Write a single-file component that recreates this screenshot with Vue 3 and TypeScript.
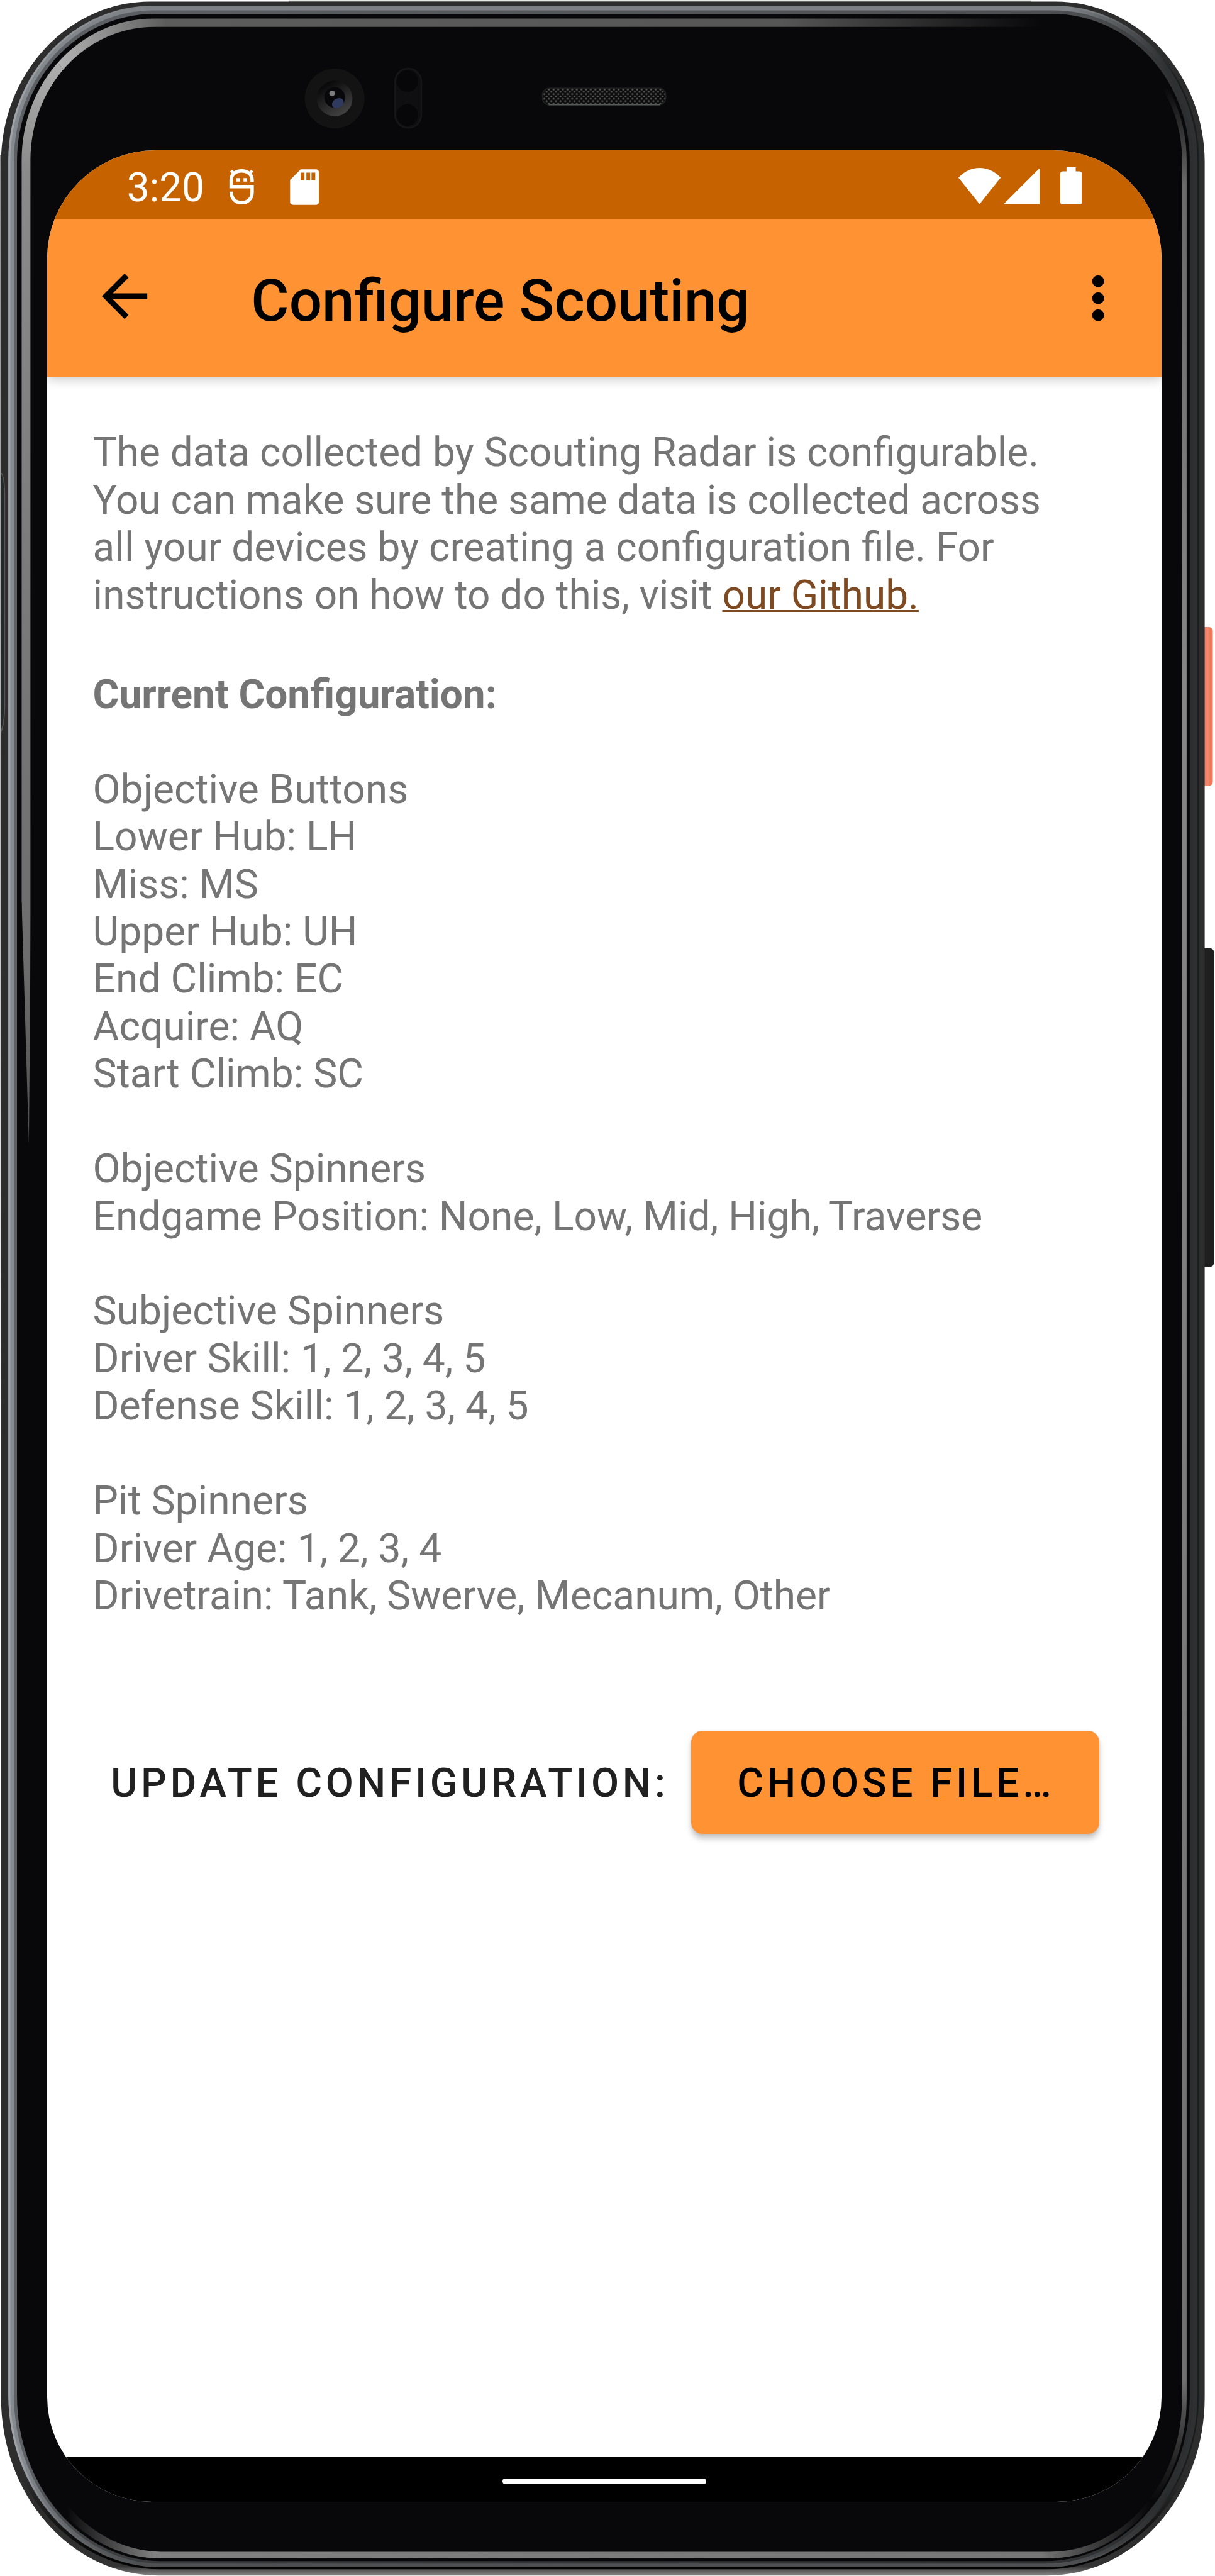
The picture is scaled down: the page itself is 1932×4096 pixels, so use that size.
<script setup lang="ts">
interface Group {
  title: string
  rows: string[]
}

const groups: Group[] = [
  {
    title: 'Objective Buttons',
    rows: ['Lower Hub: LH', 'Miss: MS', 'Upper Hub: UH', 'End Climb: EC', 'Acquire: AQ', 'Start Climb: SC'],
  },
  { title: 'Objective Spinners', rows: ['Endgame Position: None, Low, Mid, High, Traverse'] },
  { title: 'Subjective Spinners', rows: ['Driver Skill: 1, 2, 3, 4, 5', 'Defense Skill: 1, 2, 3, 4, 5'] },
  { title: 'Pit Spinners', rows: ['Driver Age: 1, 2, 3, 4', 'Drivetrain: Tank, Swerve, Mecanum, Other'] },
]

// Closed outline of the handset body, with elliptical corners:
// top corners use (tx, ty), bottom corners use (bx, by).
function outline(l: number, t: number, r: number, b: number, tx: number, ty: number, bx: number, by: number): string {
  return (
    `M${l + tx} ${t}H${r - tx}A${tx} ${ty} 0 0 1 ${r} ${t + ty}V${b - by}` +
    `A${bx} ${by} 0 0 1 ${r - bx} ${b}H${l + bx}A${bx} ${by} 0 0 1 ${l} ${b - by}` +
    `V${t + ty}A${tx} ${ty} 0 0 1 ${l + tx} ${t}Z`
  )
}

const shell = outline(2, 3, 2336, 4995, 290, 312, 305, 345)
const rim = outline(16, 11, 2325, 4979, 280, 300, 295, 335)
const rimMid = outline(20, 14, 2322, 4976, 277, 297, 292, 332)
const rimLow = outline(27, 20, 2314, 4972, 271, 291, 286, 326)
const gap = outline(33, 27, 2307, 4967, 265, 285, 280, 320)
const glint = outline(42, 36, 2301, 4962, 256, 274, 270, 308) + outline(59, 52, 2292, 4949, 240, 258, 256, 296)
const bottomLip = outline(6, 5, 2333, 4983, 288, 310, 303, 340)
</script>

<template>
  <div class="phone">
    <svg class="shell" viewBox="0 0 2356 4996" preserveAspectRatio="none" aria-hidden="true">
      <defs>
        <linearGradient id="edge" gradientUnits="userSpaceOnUse" x1="0" y1="4900" x2="0" y2="4996">
          <stop offset="0" stop-color="#2d2d2d" />
          <stop offset="0.8" stop-color="#333" />
          <stop offset="1" stop-color="#8a8a8a" />
        </linearGradient>
        <linearGradient id="lip" gradientUnits="userSpaceOnUse" x1="0" y1="4800" x2="0" y2="4960">
          <stop offset="0" stop-color="#2d2d2d" />
          <stop offset="1" stop-color="#050505" />
        </linearGradient>
        <linearGradient id="rimA" gradientUnits="userSpaceOnUse" x1="0" y1="0" x2="2356" y2="0">
          <stop offset="0" stop-color="#a3a7ab" />
          <stop offset="0.12" stop-color="#7c7f82" />
          <stop offset="0.9" stop-color="#7c7f82" />
          <stop offset="0.97" stop-color="#1b1c1d" />
        </linearGradient>
        <linearGradient id="rimB" gradientUnits="userSpaceOnUse" x1="0" y1="0" x2="2356" y2="0">
          <stop offset="0" stop-color="#868b91" />
          <stop offset="0.12" stop-color="#7e8286" />
          <stop offset="0.88" stop-color="#7e8286" />
          <stop offset="0.96" stop-color="#2e3032" />
        </linearGradient>
        <linearGradient id="rimC" gradientUnits="userSpaceOnUse" x1="0" y1="0" x2="2356" y2="0">
          <stop offset="0" stop-color="#5d6064" />
          <stop offset="0.9" stop-color="#4b4d50" />
          <stop offset="0.97" stop-color="#2c2e30" />
        </linearGradient>
        <linearGradient id="shade" gradientUnits="userSpaceOnUse" x1="0" y1="4780" x2="0" y2="4979">
          <stop offset="0" stop-color="#000" stop-opacity="0" />
          <stop offset="1" stop-color="#000" stop-opacity="0.4" />
        </linearGradient>
        <linearGradient id="gLeft" gradientUnits="userSpaceOnUse" x1="0" y1="0" x2="0" y2="2220">
          <stop offset="0.03" stop-color="#b8b8b8" />
          <stop offset="0.15" stop-color="#8a8a8a" />
          <stop offset="0.85" stop-color="#6c6c6c" />
          <stop offset="1" stop-color="#4c4c4c" />
        </linearGradient>
        <linearGradient id="gTop" gradientUnits="userSpaceOnUse" x1="0" y1="0" x2="2020" y2="0">
          <stop offset="0.05" stop-color="#b8b8b8" />
          <stop offset="0.16" stop-color="#5c5c5c" />
          <stop offset="0.75" stop-color="#565656" />
          <stop offset="1" stop-color="#565656" stop-opacity="0" />
        </linearGradient>
        <linearGradient id="gBottom" gradientUnits="userSpaceOnUse" x1="130" y1="0" x2="2230" y2="0">
          <stop offset="0" stop-color="#808080" stop-opacity="0" />
          <stop offset="0.08" stop-color="#808080" />
          <stop offset="0.9" stop-color="#767676" />
          <stop offset="1" stop-color="#666" stop-opacity="0" />
        </linearGradient>
        <linearGradient id="gRight" gradientUnits="userSpaceOnUse" x1="0" y1="170" x2="0" y2="4850">
          <stop offset="0" stop-color="#666" stop-opacity="0" />
          <stop offset="0.04" stop-color="#6a6a6a" />
          <stop offset="0.25" stop-color="#868686" />
          <stop offset="0.95" stop-color="#707070" />
          <stop offset="1" stop-color="#555" stop-opacity="0" />
        </linearGradient>
        <linearGradient id="power" x1="0" y1="0" x2="1" y2="0">
          <stop offset="0" stop-color="#c9553b" />
          <stop offset="0.3" stop-color="#ee7b60" />
          <stop offset="0.6" stop-color="#f08a72" />
          <stop offset="0.85" stop-color="#ef6f4b" />
          <stop offset="1" stop-color="#f0a090" />
        </linearGradient>
        <linearGradient id="hair" x1="0" y1="0" x2="0" y2="1">
          <stop offset="0" stop-color="#8f8f8f" />
          <stop offset="0.6" stop-color="#c4c4c4" />
          <stop offset="1" stop-color="#fff" />
        </linearGradient>
        <linearGradient id="lensRing" x1="0" y1="0" x2="0.6" y2="1">
          <stop offset="0.2" stop-color="#0a0a0b" />
          <stop offset="1" stop-color="#414141" />
        </linearGradient>
        <pattern id="mesh" width="9" height="9" patternUnits="userSpaceOnUse">
          <rect width="9" height="9" fill="#0b0b0b" />
          <circle cx="2.5" cy="2.5" r="2" fill="#515151" />
          <circle cx="7" cy="7" r="2" fill="#515151" />
        </pattern>
        <clipPath id="cLeft"><path d="M0 0L400 436V1750H60L56 2220L42 1750H0Z" /></clipPath>
        <clipPath id="cTop"><path d="M0 0L400 436H2060V0Z" /></clipPath>
        <clipPath id="cBottom"><path d="M100 4840H2260V4996H100Z" /></clipPath>
        <clipPath id="cRight"><path d="M2200 150H2356V4860H2200Z" /></clipPath>
      </defs>

      <rect x="0" y="300" width="4" height="2500" fill="url(#hair)" />
      <path d="M560 1H2000V6H560Z" fill="#a4aaa4" />
      <rect x="2328" y="1216" width="24" height="308" rx="8" fill="url(#power)" />
      <rect x="2326" y="1839" width="28" height="618" rx="8" fill="#1f1f20" />

      <path :d="shell" fill="url(#edge)" />
      <path :d="bottomLip" fill="url(#lip)" />
      <path d="M2 917Q9 925 9 960V1370Q9 1400 2 1420" fill="#26292a" stroke="#555" stroke-width="2" />
      <path :d="rim" fill="url(#rimA)" />
      <path :d="rimMid" fill="url(#rimB)" />
      <path :d="rimLow" fill="url(#rimC)" />
      <path :d="rim" fill="url(#shade)" />
      <path :d="gap" fill="#08080a" />
      <g fill-rule="evenodd">
        <path :d="glint" fill="url(#gLeft)" clip-path="url(#cLeft)" />
        <path :d="glint" fill="url(#gTop)" clip-path="url(#cTop)" />
        <path :d="glint" fill="url(#gBottom)" clip-path="url(#cBottom)" />
        <path :d="glint" fill="url(#gRight)" clip-path="url(#cRight)" />
      </g>

      <!-- front camera -->
      <circle cx="649" cy="191" r="58" fill="#131313" />
      <circle cx="649" cy="191" r="34.5" fill="url(#lensRing)" />
      <circle cx="649" cy="189" r="20" fill="#08080b" />
      <ellipse cx="655" cy="200" rx="12" ry="9" fill="#303a5e" transform="rotate(-30 655 200)" />
      <circle cx="644" cy="181" r="5.5" fill="#7d7d7d" />
      <!-- proximity sensors -->
      <rect x="766" y="133" width="51" height="115" rx="25.5" fill="#0f0f11" stroke="#161618" stroke-width="3" />
      <circle cx="790" cy="157" r="21" fill="#070709" />
      <circle cx="790" cy="223" r="21" fill="#070709" />
      <!-- earpiece -->
      <rect x="1052" y="171" width="239" height="32" rx="13" fill="url(#mesh)" stroke="#222" stroke-width="2" />
      <path d="M1064 203H1280" stroke="#565a59" stroke-width="2.5" />
    </svg>

    <div class="screen">
      <header class="status">
        <span class="clock">3:20</span>
        <svg class="debug" viewBox="42 52 150 214" fill="none" stroke="#fff" stroke-width="20">
          <path
            d="M177 131V118C177 86 150 66 116 66C82 66 55 86 55 118V157H177V190C177 228 150 251 116 251C82 251 55 228 55 187"
          />
          <path d="M55 64L76 86M178 64L157 86" stroke-width="17" />
          <path d="M86 118H107M127 118H148" stroke-width="20" />
        </svg>
        <svg class="sdcard" viewBox="397 54 170 209" fill="#fff">
          <path
            fill-rule="evenodd"
            d="M460 55H547Q566 55 566 74V244Q566 262 547 262H417Q398 262 398 244V117ZM460 74V119H482V74ZM493 74V119H515V74ZM523 74V119H545V74Z"
          />
        </svg>
        <span class="spacer"></span>
        <svg class="wifi" viewBox="0 0 82 70" fill="#fff">
          <path d="M0 19Q18 0 41 0T82 19L41 70Z" />
        </svg>
        <svg class="signal" viewBox="0 0 70 70" fill="#fff"><path d="M70 0V70H0Z" /></svg>
        <svg class="battery" viewBox="0 0 42 72" fill="#fff">
          <path d="M12 0H30V8H37Q42 8 42 13V67Q42 72 37 72H5Q0 72 0 67V13Q0 8 5 8H12Z" />
        </svg>
      </header>

      <nav class="appbar">
        <svg class="back" viewBox="0 0 24 24"><path d="M20 11H7.83l5.59-5.59L12 4l-8 8 8 8 1.41-1.41L7.83 13H20v-2z" /></svg>
        <h1>Configure Scouting</h1>
        <svg class="more" viewBox="0 0 24 24">
          <circle cx="12" cy="6" r="2.08" />
          <circle cx="12" cy="12" r="2.08" />
          <circle cx="12" cy="18" r="2.08" />
        </svg>
      </nav>

      <main>
        <p class="intro">
          The data collected by Scouting Radar is configurable.<br />
          You can make sure the same data is collected across<br />
          all your devices by creating a configuration file. For<br />
          instructions on how to do this, visit <a href="#">our Github.</a>
        </p>
        <h2>Current Configuration:</h2>
        <section v-for="g in groups" :key="g.title">
          <div>{{ g.title }}</div>
          <div v-for="row in g.rows" :key="row">{{ row }}</div>
        </section>
        <div class="update">
          <span class="label">UPDATE CONFIGURATION:</span>
          <button type="button">CHOOSE FILE…</button>
        </div>
      </main>

      <footer class="navbar"><span class="handle"></span></footer>
    </div>
  </div>
</template>

<style>
html {
  font-size: 8.2px;
}
body {
  background: #fff;
}
</style>

<style scoped>
.phone {
  position: relative;
  box-sizing: border-box;
  width: 1932px;
  height: 4096px;
  padding: 29.2rem 0 0 9.2rem;
  overflow: hidden;
  font-family: Roboto, sans-serif;
}
.shell {
  position: absolute;
  inset: 0;
  width: 1932px;
  height: 4096px;
}
.screen {
  position: relative;
  display: flex;
  flex-direction: column;
  width: 216rem;
  height: 455.9rem;
  overflow: hidden;
  background: #fff;
  border-radius: 21rem 21rem 20.3rem 20.3rem;
}
.status {
  z-index: 2;
  display: flex;
  flex: none;
  align-items: flex-start;
  box-sizing: border-box;
  height: 13.2rem;
  padding: 3.4rem 15.4rem 0 15.4rem;
  background: #c66300;
}
.clock {
  width: 19.6rem;
  margin-top: -0.6rem;
  color: #fff;
  font-size: 7.8rem;
  line-height: 9rem;
}
.debug {
  width: 5rem;
  height: 7.13rem;
  margin: 0.1rem 6.8rem 0 0.2rem;
}
.sdcard {
  width: 5.65rem;
  height: 6.97rem;
  margin-top: 0.2rem;
}
.spacer {
  flex: 1;
}
.wifi {
  width: 8.2rem;
  height: 7rem;
}
.signal {
  width: 7rem;
  height: 7rem;
  margin: 0 4rem 0 0.6rem;
}
.battery {
  width: 4.2rem;
  height: 7.2rem;
  margin-top: -0.2rem;
}
.appbar {
  z-index: 1;
  display: flex;
  flex: none;
  align-items: center;
  box-sizing: border-box;
  height: 30.8rem;
  padding: 0 5.6rem 0 8.4rem;
  background: #ff9333;
  box-shadow: 0 0.4rem 2.2rem rgba(0, 0, 0, 0.24);
}
.back {
  width: 13.2rem;
  height: 13.2rem;
  margin-bottom: 0.6rem;
}
.appbar h1 {
  flex: 1;
  margin: 1.3rem 0 0 17.9rem;
  font-size: 11.27rem;
  font-weight: 500;
  line-height: 13rem;
}
.more {
  width: 13.2rem;
  height: 13.2rem;
}
main {
  flex: 1;
  padding: 10rem 8.8rem 0;
  color: #757575;
  font-size: 7.82rem;
  line-height: 9.2rem;
  white-space: nowrap;
}
.intro {
  margin: 0 0 10.1rem;
  font-size: 7.795rem;
}
.intro a {
  color: #7d4a22;
  text-decoration-thickness: 0.4rem;
}
h2 {
  margin: 0 0 9.2rem;
  font-size: 7.8rem;
  font-weight: 700;
}
section {
  margin-bottom: 9.2rem;
}
section:last-of-type {
  margin-bottom: 0;
}
.update {
  display: flex;
  align-items: center;
  justify-content: space-between;
  margin-top: 21.5rem;
  padding: 0 3.2rem 0 3.5rem;
  color: #212121;
  font-weight: 500;
  letter-spacing: 0.0893em;
}
.label {
  padding-top: 0.5rem;
}
button {
  box-sizing: border-box;
  width: 79.2rem;
  height: 20rem;
  padding: 0.5rem 0 0 0.3rem;
  color: #000;
  font: inherit;
  letter-spacing: inherit;
  background: #ff9333;
  border: 0;
  border-radius: 2.2rem;
  box-shadow: 0 0.9rem 1.2rem rgba(0, 0, 0, 0.2), 0 0.2rem 0.6rem rgba(0, 0, 0, 0.08);
}
.navbar {
  display: flex;
  flex: none;
  align-items: center;
  justify-content: center;
  box-sizing: border-box;
  height: 8.8rem;
  padding-top: 1rem;
  background: #000;
}
.handle {
  width: 39.6rem;
  height: 1.1rem;
  background: #fff;
  border-radius: 1rem;
}
</style>
